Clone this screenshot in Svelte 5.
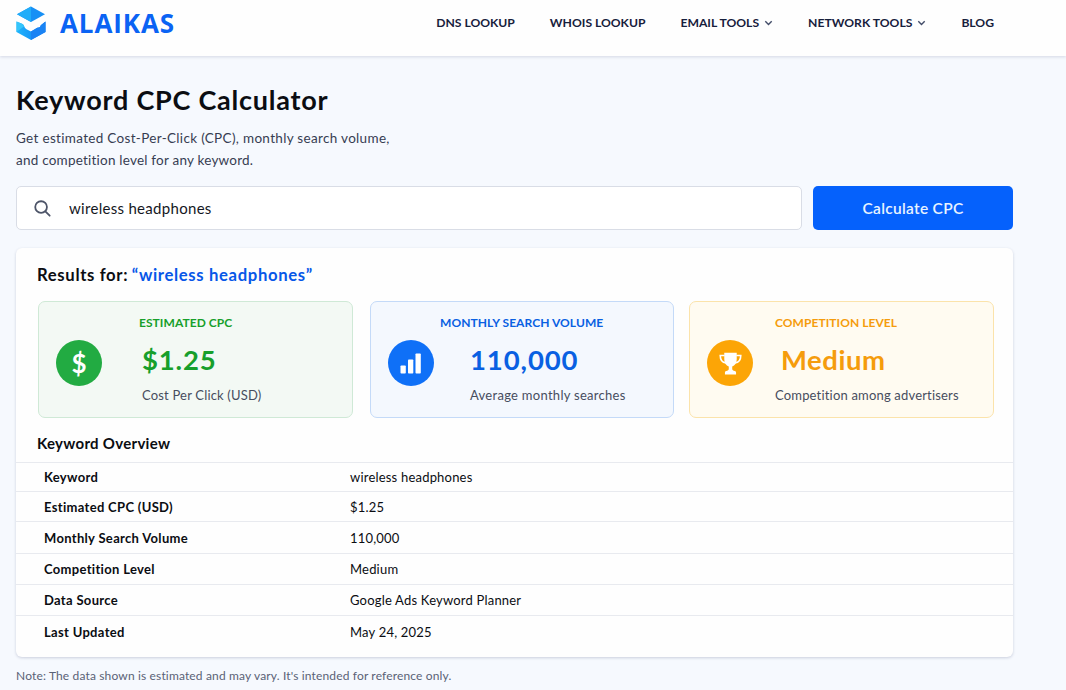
<script lang="ts">
  let keyword = $state('wireless headphones');

  const nav = [
    { label: 'DNS LOOKUP', menu: false },
    { label: 'WHOIS LOOKUP', menu: false },
    { label: 'EMAIL TOOLS', menu: true },
    { label: 'NETWORK TOOLS', menu: true },
    { label: 'BLOG', menu: false },
  ];

  const stats = [
    { kind: 'cpc', label: 'ESTIMATED CPC', value: '$1.25', hint: 'Cost Per Click (USD)' },
    { kind: 'volume', label: 'MONTHLY SEARCH VOLUME', value: '110,000', hint: 'Average monthly searches' },
    { kind: 'level', label: 'COMPETITION LEVEL', value: 'Medium', hint: 'Competition among advertisers' },
  ];

  const overview = [
    ['Keyword', 'wireless headphones'],
    ['Estimated CPC (USD)', '$1.25'],
    ['Monthly Search Volume', '110,000'],
    ['Competition Level', 'Medium'],
    ['Data Source', 'Google Ads Keyword Planner'],
    ['Last Updated', 'May 24, 2025'],
  ];
</script>

<header>
  <a class="brand" href="#top">
    <svg width="30" height="34" viewBox="0 0 30 34">
      <defs>
        <linearGradient id="side" x1="0" x2="1">
          <stop offset="0" stop-color="#20b4fb" />
          <stop offset="1" stop-color="#0d7cf5" />
        </linearGradient>
      </defs>
      <path d="M15 .5 1 8.300 15 16l14-7.700Z" fill="#1790f5" />
      <path d="M15 .5 1 8.300 15 16Z" fill="#20adf9" />
      <path d="M.5 15.500 6 17.800q1.700.7 2.200 2.500.6 2 2.300 3L15 25.600l5-3.100q1-.7 2.800-.9 1.500-.2 2-2.400L29.500 15.500V26L15 34 .5 26Z" fill="url(#side)" />
      <path d="M.5 15.500 6 17.800q1.700.7 2.200 2.500L.5 26Z" fill="#35c5fb" />
      <path d="m15 25.600 5-3.100q1-.7 2.800-.9 1.500-.2 2-2.400L29.500 15.500V26L15 34Z" fill="#1a83f4" />
    </svg>
    <span>ALAIKAS</span>
  </a>
  <nav>
    {#each nav as item}
      <a href="#top">
        {item.label}
        {#if item.menu}
          <svg width="9" height="6" viewBox="0 0 9 6"><path d="M1.300 1.200 4.500 4.400l3.200-3.200" /></svg>
        {/if}
      </a>
    {/each}
  </nav>
</header>

<main>
  <h1>Keyword CPC Calculator</h1>
  <p class="intro">
    Get estimated Cost-Per-Click (CPC), monthly search volume,<br />
    <span>and competition level for any keyword.</span>
  </p>

  <div class="search">
    <label>
      <svg width="17" height="17" viewBox="0 0 18 18">
        <circle cx="7.500" cy="7.500" r="6.200" />
        <path d="m12 12 4.600 4.600" />
      </svg>
      <input type="text" bind:value={keyword} />
    </label>
    <button>Calculate CPC</button>
  </div>

  <section class="results">
    <h2>Results for: <em>“wireless headphones”</em></h2>

    <div class="stats">
      {#each stats as stat}
        <article class={stat.kind}>
          <div class="icon">
            {#if stat.kind === 'cpc'}
              <span class="dollar">$</span>
            {:else if stat.kind === 'volume'}
              <svg width="22" height="21" viewBox="0 0 22 21">
                <rect x="0.500" y="12.500" width="5.300" height="8" rx=".8" />
                <rect x="8" y="6.500" width="5.300" height="14" rx=".8" />
                <rect x="15.500" y="0.500" width="5.300" height="20" rx=".8" />
              </svg>
            {:else}
              <svg width="23" height="23" viewBox="0 0 24 24">
                <path d="M5.500.8h13v6.700c0 3.900-2 6.800-4.700 7.600v2.700c0 1.300 1.100 1.800 2.700 2.100.8.200 1.300.8 1.300 1.600v2H6.200v-2c0-.8.500-1.400 1.300-1.600 1.600-.3 2.700-.8 2.700-2.100v-2.700C7.500 14.300 5.500 11.400 5.500 7.500Z" />
                <path class="handle" d="M6 3.700H1.300c0 4.600 2 7.300 6 7.600M18 3.700h4.700c0 4.600-2 7.300-6 7.600" />
              </svg>
            {/if}
          </div>
          <div class="text">
            <h3>{stat.label}</h3>
            <strong>{stat.value}</strong>
            <small>{stat.hint}</small>
          </div>
        </article>
      {/each}
    </div>

    <h4>Keyword Overview</h4>
    <dl>
      {#each overview as [name, value]}
        <div class="row">
          <dt>{name}</dt>
          <dd>{value}</dd>
        </div>
      {/each}
    </dl>
  </section>

  <p class="note">Note: The data shown is estimated and may vary. It's intended for reference only.</p>
</main>

<style>
  :global(body) {
    background: #f6f9fe;
    font-family: Lato, 'Open Sans', sans-serif;
    color: #0b0d12;
    overflow: hidden;
  }
  h1, h2, h3, h4, p, dl, dd {
    margin: 0;
  }
  a {
    color: inherit;
    text-decoration: none;
  }

  header {
    display: flex;
    justify-content: space-between;
    box-sizing: border-box;
    height: 56px;
    padding: 6px 72px 0 16px;
    background: #fefefe;
    box-shadow: 0 1px 3px rgba(40, 50, 100, 0.17);
  }
  .brand {
    display: flex;
    gap: 14px;
    height: 34px;
    align-items: center;
    color: #0a63f4;
    font: 700 26px 'Open Sans', sans-serif;
    letter-spacing: 0.900px;
  }
  nav {
    display: flex;
    gap: 35px;
    height: 33px;
    align-items: center;
    color: #17203c;
    font-size: 12.150px;
    font-weight: 700;
  }
  nav a {
    display: flex;
    align-items: center;
    gap: 5px;
  }
  nav path {
    fill: none;
    stroke: #424c68;
    stroke-width: 1.400;
  }

  main {
    width: 997px;
    padding: 27px 0 0 16px;
  }
  h1 {
    font-size: 27px;
    line-height: 34px;
    letter-spacing: 0.760px;
  }
  .intro {
    margin-top: 10px;
    color: #363d52;
    font-size: 13.500px;
    line-height: 22px;
    letter-spacing: 0.320px;
  }
  .intro span {
    letter-spacing: 0.220px;
  }

  .search {
    display: flex;
    gap: 11px;
    margin-top: 15px;
  }
  label {
    flex: 1;
    display: flex;
    align-items: center;
    gap: 18px;
    box-sizing: border-box;
    height: 44px;
    padding-left: 17px;
    background: #fff;
    border: 1px solid #d9dde6;
    border-radius: 5px;
  }
  label svg {
    fill: none;
    stroke: #4d5468;
    stroke-width: 1.900;
    stroke-linecap: round;
  }
  input {
    flex: 1;
    padding: 0 0 1px;
    border: 0;
    outline: 0;
    background: none;
    color: #15171e;
    font: 15px Lato, sans-serif;
    letter-spacing: 0.300px;
  }
  button {
    width: 200px;
    height: 44px;
    padding-bottom: 2px;
    border: 0;
    border-radius: 5px;
    background: #0561fc;
    color: #e8f3ff;
    font: 600 15.500px Lato, sans-serif;
    letter-spacing: 0.300px;
  }

  .results {
    box-sizing: border-box;
    height: 409px;
    margin-top: 18px;
    padding-top: 15px;
    background: #fefefe;
    border-radius: 6px;
    box-shadow: 0 1px 3px rgba(30, 45, 90, 0.2);
  }
  h2 {
    padding-left: 21px;
    font-size: 16.700px;
    line-height: 24px;
    letter-spacing: 0.640px;
  }
  em {
    margin-left: -1px;
    color: #0757e8;
    font-style: normal;
  }

  .stats {
    display: flex;
    margin: 14px 0 0 22px;
  }
  article {
    display: flex;
    box-sizing: border-box;
    height: 117px;
    padding: 13px 0 0 17px;
    border: 1px solid;
    border-radius: 7px;
  }
  .icon {
    display: flex;
    flex: none;
    align-items: center;
    justify-content: center;
    width: 46px;
    height: 46px;
    margin-top: 25px;
    border-radius: 50%;
  }
  .icon svg {
    fill: #fff;
  }
  .handle {
    fill: none;
    stroke: #fff;
    stroke-width: 1.700;
  }
  .dollar {
    color: #fff;
    font-size: 26px;
    font-weight: 700;
    line-height: 26px;
  }
  .text {
    display: flex;
    flex-direction: column;
    white-space: nowrap;
  }
  h3 {
    font-size: 12px;
    font-weight: 700;
    line-height: 16px;
    letter-spacing: 0.060px;
  }
  strong {
    margin-top: 11px;
    font-size: 27.500px;
    line-height: 36px;
  }
  small {
    margin-top: 8px;
    color: #474d5e;
    font-size: 13px;
    line-height: 18px;
    letter-spacing: 0.180px;
  }

  .cpc {
    width: 315px;
    background: #f3f9f4;
    border-color: #cfe9d6;
  }
  .cpc .icon {
    background: #22ab42;
  }
  .cpc .text {
    margin-left: 40px;
  }
  .cpc h3 {
    margin-left: -3px;
  }
  .cpc h3,
  .cpc strong {
    color: #179f2b;
  }
  .cpc strong {
    letter-spacing: 0.850px;
  }
  .volume {
    width: 304px;
    margin: 0 15px 0 17px;
    background: #f4f8fe;
    border-color: #c4daf8;
  }
  .volume .icon {
    background: #0f70f7;
  }
  .volume .text {
    margin-left: 36px;
  }
  .volume h3 {
    margin-left: -30px;
  }
  .volume h3,
  .volume strong {
    color: #0960e2;
  }
  .volume strong {
    letter-spacing: 0.900px;
  }
  .volume small {
    letter-spacing: 0.280px;
  }
  .level {
    width: 305px;
    background: #fffbf1;
    border-color: #fbe3ab;
  }
  .level .icon {
    background: #fca506;
  }
  .level .text {
    margin-left: 22px;
  }
  .level h3,
  .level strong {
    color: #f59c0c;
  }
  .level strong {
    margin-left: 6px;
    letter-spacing: 0.550px;
  }

  h4 {
    margin-top: 13px;
    padding-left: 21px;
    font-size: 15px;
    line-height: 24px;
    letter-spacing: 0.290px;
  }
  dl {
    margin-top: 7px;
    font-size: 13px;
  }
  .row {
    display: flex;
    align-items: center;
    box-sizing: border-box;
    height: 31px;
    padding-left: 28px;
    border-top: 1px solid #e8eaef;
  }
  .row:nth-child(1) {
    height: 29px;
  }
  .row:nth-child(3) {
    height: 32px;
  }
  .row:last-child {
    height: 33px;
  }
  .row:nth-child(2) {
    height: 30px;
  }
  dt {
    width: 306px;
    font-weight: 700;
    letter-spacing: 0.320px;
  }
  dd {
    letter-spacing: 0.200px;
  }

  .note {
    margin-top: 10px;
    color: #5a6276;
    font-size: 12px;
    line-height: 18px;
    letter-spacing: 0.150px;
  }
</style>
